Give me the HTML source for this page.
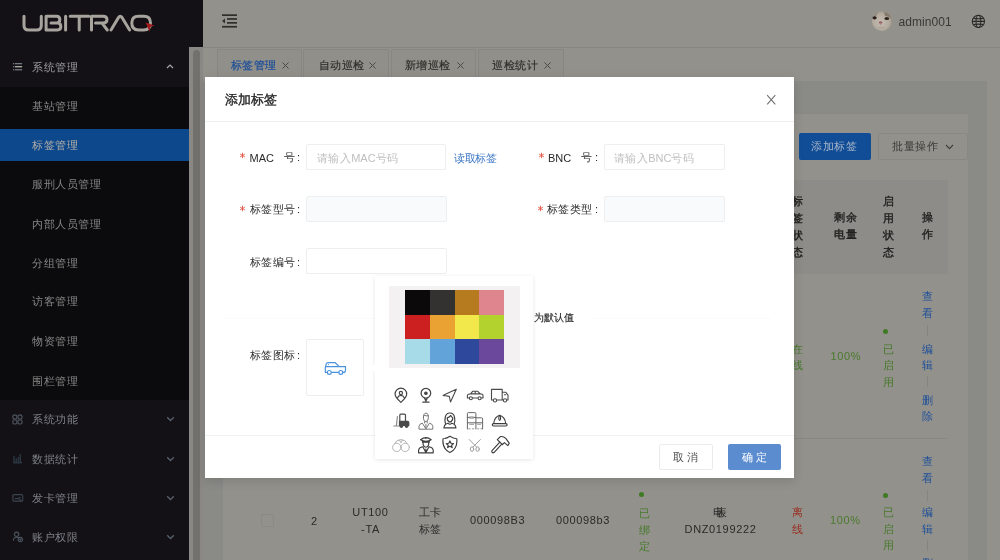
<!DOCTYPE html>
<html><head><meta charset="utf-8">
<style>
*{box-sizing:border-box;margin:0;padding:0}
html,body{width:1000px;height:560px;overflow:hidden}
body{position:relative;will-change:transform;background:#92918c;font-family:"Liberation Sans",sans-serif;font-size:11.5px;color:#2b2a28}
.a{position:absolute}
.t{position:absolute;white-space:nowrap;line-height:1}
.cj{font-size:11px;letter-spacing:0.5px}
/* sidebar */
#logo{left:0;top:0;width:203px;height:47px;background:#131116}
#side{left:0;top:47px;width:189px;height:513px;background:#131116}
#sub{left:0;top:87px;width:189px;height:313px;background:#0b0a0c}
#sel{left:0;top:128.7px;width:189px;height:32.5px;background:#0e488c}
.mi{color:#878787}
.mh{color:#7e8088}
#sb{left:189px;top:47px;width:14px;height:513px;background:#898885}
#thumb{left:193px;top:50px;width:7.4px;height:520px;background:#72716d;border-radius:4px}
/* header */
#hdr{left:203px;top:0;width:797px;height:48px;background:#92918c;border-bottom:1.5px solid #878682}
#tabs{left:203px;top:48px;width:797px;height:33px;background:#92918c}
.tab{position:absolute;top:49px;height:32px;background:#908f8a;border:1px solid #878682;border-bottom:none;border-radius:2px 2px 0 0}
#pg{left:203px;top:81px;width:784px;height:479px;background:#8a8a87}
#card{left:222.5px;top:114px;width:745.5px;height:446px;background:#92918c}
#thd{left:222px;top:180px;width:726px;height:94px;background:#8d8c88}
.th{position:absolute;font-size:11px;line-height:17px;color:#1f1e1c;-webkit-text-stroke:0.35px #1f1e1c;white-space:nowrap;letter-spacing:0.5px}
.td{position:absolute;font-size:11px;line-height:16.7px;color:#2b2a28;white-space:nowrap;letter-spacing:0.5px}
.ln{font-size:11px;letter-spacing:0.65px;color:#2b2a28}
.g{color:#467a2a}.r{color:#9a2e20}.b{color:#1e4f99}
/* modal */
#modal{left:205px;top:77px;width:589px;height:401px;background:#fff;box-shadow:0 3px 10px rgba(0,0,0,0.13)}
.lbl{color:#2a2a2a}
.req{color:#f04134;font-size:11px}
.inp{position:absolute;height:26px;border:1px solid #eceef0;border-radius:2px;background:#fff}
.inp.dis{background:#f9fafb}
.ph{color:#bfbfbf;letter-spacing:0.4px}
#pop{left:375px;top:276.3px;width:158px;height:182.5px;background:#fff;box-shadow:0 1px 4px rgba(0,0,0,0.1);border-radius:1px}
</style></head><body>
<!-- sidebar -->
<div id="logo" class="a">
<svg class="a" style="left:0;top:0" width="203" height="47" viewBox="0 0 203 47">
<g fill="none" stroke="#a6a49d" stroke-width="3" stroke-linecap="round" stroke-linejoin="round">
<path d="M24 16.2V25.5Q24 30 28.5 30H36.8Q41.3 30 41.3 25.5V16.2"/>
<path d="M46.1 16.2V30H57.5Q60.8 30 60.8 26.6Q60.8 23.1 57.5 23.1H51M46.1 16.2H56.5Q59.8 16.2 59.8 19.6Q59.8 23.1 56.5 23.1"/>
<path d="M65.6 16.2V30"/>
<path d="M70.2 16.2H88.8M79.2 16.2V30"/>
<path d="M91.5 30V16.2H103Q107 16.2 107 19.6Q107 23.1 103 23.1H95.5M102 23.1L107.3 30"/>
<path d="M111 30L118.5 17.5Q120.2 15 122 17.5L129.6 30"/>
<path d="M138.5 16.2H143.8Q150.5 16.2 150.5 23.1Q150.5 30 143.8 30H138.5Q131.8 30 131.8 23.1Q131.8 16.2 138.5 16.2Z"/>
</g>
<path d="M145.5 22.5L154.5 25.5L150.5 26.8L149.5 31.5Z" fill="#a31919"/>
</svg>
</div>
<div id="side" class="a"></div>
<div id="sub" class="a"></div>
<div id="sel" class="a"></div>
<!-- menu -->
<svg class="a" style="left:13px;top:63px" width="10" height="8" viewBox="0 0 10 8"><g fill="#727880"><rect x="0" y="0" width="1.2" height="1.3"/><rect x="0" y="3.05" width="1.2" height="1.3"/><rect x="0" y="6.1" width="1.2" height="1.3"/><rect x="1.9" y="0" width="7.2" height="1.3"/><rect x="1.9" y="3.05" width="7.2" height="1.3" fill="#b4b2ab"/><rect x="1.9" y="6.1" width="7.2" height="1.3"/></g></svg>
<div class="t cj" style="left:32px;top:62px;color:#9c9c9c">系统管理</div>
<svg class="a" style="left:166px;top:64px" width="8" height="5" viewBox="0 0 8 5"><path d="M1 4L4 1L7 4" fill="none" stroke="#a8a8a8" stroke-width="1.2"/></svg>
<div class="t cj mi" style="left:32px;top:100.5px">基站管理</div>
<div class="t cj mi" style="left:32px;top:140px;color:#b3afa7">标签管理</div>
<div class="t cj mi" style="left:32px;top:179px">服刑人员管理</div>
<div class="t cj mi" style="left:32px;top:219px">内部人员管理</div>
<div class="t cj mi" style="left:32px;top:257.5px">分组管理</div>
<div class="t cj mi" style="left:32px;top:296px">访客管理</div>
<div class="t cj mi" style="left:32px;top:336px">物资管理</div>
<div class="t cj mi" style="left:32px;top:375.5px">围栏管理</div>
<div class="t cj mh" style="left:32px;top:414px">系统功能</div>
<div class="t cj mh" style="left:32px;top:453.5px">数据统计</div>
<div class="t cj mh" style="left:32px;top:493px">发卡管理</div>
<div class="t cj mh" style="left:32px;top:532px">账户权限</div>
<svg class="a" style="left:12px;top:414px" width="11" height="11" viewBox="0 0 11 11"><g fill="none" stroke="#4c535d" stroke-width="1.1"><circle cx="2.9" cy="3" r="2.1"/><circle cx="8" cy="3" r="2.1"/><circle cx="2.9" cy="7.9" r="2.1"/><circle cx="8" cy="7.9" r="2.1"/></g></svg>
<svg class="a" style="left:12px;top:453px" width="11" height="11" viewBox="0 0 11 11"><g fill="#2c3744"><rect x="1" y="8.6" width="9" height="1.8"/><rect x="1.3" y="2.8" width="1.4" height="5.8"/><rect x="3.6" y="5.5" width="1.4" height="3.1"/><rect x="5.7" y="4" width="1.4" height="4.6"/><rect x="7.6" y="1.2" width="1.4" height="7.4"/></g></svg>
<svg class="a" style="left:12px;top:493px" width="12" height="10" viewBox="0 0 12 10"><g fill="none" stroke="#3b434e" stroke-width="1.2"><rect x="0.9" y="1.6" width="9.8" height="6.6" rx="1"/><path d="M2.8 5.6H6.5L8.4 4.2M7.5 6.2L9.3 8.4"/></g></svg>
<svg class="a" style="left:12px;top:531px" width="12" height="12" viewBox="0 0 12 12"><g fill="none" stroke="#4a525c" stroke-width="1.1"><circle cx="4.6" cy="3.3" r="2.2"/><path d="M1.4 9.8Q1.4 6.3 4.6 6.3Q6 6.3 6.8 7"/><circle cx="8.3" cy="8.6" r="2.2"/><circle cx="8.3" cy="8.6" r="0.6" fill="#4a525c"/></g></svg>
<svg class="a" style="left:166px;top:416px" width="9" height="6" viewBox="0 0 9 6"><path d="M1.2 1.2L4.5 4.5L7.8 1.2" fill="none" stroke="#56606a" stroke-width="1.3"/></svg>
<svg class="a" style="left:166px;top:455.5px" width="9" height="6" viewBox="0 0 9 6"><path d="M1.2 1.2L4.5 4.5L7.8 1.2" fill="none" stroke="#56606a" stroke-width="1.3"/></svg>
<svg class="a" style="left:166px;top:495px" width="9" height="6" viewBox="0 0 9 6"><path d="M1.2 1.2L4.5 4.5L7.8 1.2" fill="none" stroke="#56606a" stroke-width="1.3"/></svg>
<svg class="a" style="left:166px;top:534px" width="9" height="6" viewBox="0 0 9 6"><path d="M1.2 1.2L4.5 4.5L7.8 1.2" fill="none" stroke="#56606a" stroke-width="1.3"/></svg>
<div id="sb" class="a"></div>
<div id="thumb" class="a"></div>
<!-- header -->
<div id="hdr" class="a"></div>
<svg class="a" style="left:220px;top:12px" width="20" height="18" viewBox="0 0 20 18"><g fill="#2f2e2b"><rect x="2" y="2.3" width="15" height="1.7"/><rect x="7" y="6.1" width="10" height="1.7"/><rect x="7" y="10" width="10" height="1.7"/><rect x="2" y="13.9" width="15" height="1.7"/><path d="M2.1 8.95L5 6.5V11.4Z"/></g></svg>
<svg class="a" style="left:872px;top:11px" width="20" height="20" viewBox="0 0 20 20"><defs><radialGradient id="fg" cx="0.45" cy="0.55" r="0.6"><stop offset="0" stop-color="#c4bdb2"/><stop offset="0.7" stop-color="#b3aa9d"/><stop offset="1" stop-color="#978c7f"/></radialGradient></defs><circle cx="10" cy="10" r="10" fill="url(#fg)"/><path d="M12 1Q18 2 19.5 8Q17 5 13 5Z" fill="#857a6e"/><path d="M1 8Q2 3 6 1.5Q5 4 3 6Z" fill="#8c8276"/><ellipse cx="2.6" cy="6.8" rx="2.1" ry="1.6" fill="#2a211d"/><ellipse cx="14.8" cy="7.5" rx="2.4" ry="1.6" fill="#2e2520"/><ellipse cx="8.6" cy="11.4" rx="1.8" ry="1.2" fill="#9a6268"/><path d="M8.6 12.3V14" stroke="#8d6a66" stroke-width="0.6"/><path d="M6 17Q9 15.6 12 17" stroke="#a59a8e" stroke-width="0.6" fill="none"/></svg>
<div class="t" style="left:898.5px;top:16px;font-size:12px;color:#3a3936;letter-spacing:0.05px">admin001</div>
<svg class="a" style="left:970px;top:13px" width="17" height="17" viewBox="0 0 17 17"><g fill="none" stroke="#2a2927" stroke-width="1.05"><circle cx="8.4" cy="8.4" r="6.1"/><ellipse cx="8.4" cy="8.4" rx="2.4" ry="6.1"/><path d="M2.3 8.4H14.5M3.4 5.2Q8.4 6.2 13.4 5.2M3.4 11.6Q8.4 10.6 13.4 11.6"/></g></svg>
<div id="tabs" class="a"></div>
<div class="tab" style="left:216.5px;width:85px"></div>
<div class="tab" style="left:303px;width:86px"></div>
<div class="tab" style="left:391px;width:85px"></div>
<div class="tab" style="left:478px;width:86px"></div>
<div class="t cj" style="left:230.5px;top:60px;color:#1b4d98;-webkit-text-stroke:0.2px #1b4d98">标签管理</div>
<div class="t cj" style="left:318.5px;top:60px;color:#2e2d2a;-webkit-text-stroke:0.15px #2e2d2a">自动巡检</div>
<div class="t cj" style="left:404.5px;top:60px;color:#2e2d2a;-webkit-text-stroke:0.15px #2e2d2a">新增巡检</div>
<div class="t cj" style="left:492px;top:60px;color:#2e2d2a;-webkit-text-stroke:0.15px #2e2d2a">巡检统计</div>
<svg class="a" style="left:282px;top:62px" width="7" height="7" viewBox="0 0 7 7"><path d="M0.5 0.5L6.5 6.5M6.5 0.5L0.5 6.5" stroke="#4a4946" stroke-width="1"/></svg>
<svg class="a" style="left:369px;top:62px" width="7" height="7" viewBox="0 0 7 7"><path d="M0.5 0.5L6.5 6.5M6.5 0.5L0.5 6.5" stroke="#4a4946" stroke-width="1"/></svg>
<svg class="a" style="left:457px;top:62px" width="7" height="7" viewBox="0 0 7 7"><path d="M0.5 0.5L6.5 6.5M6.5 0.5L0.5 6.5" stroke="#4a4946" stroke-width="1"/></svg>
<svg class="a" style="left:544px;top:62px" width="7" height="7" viewBox="0 0 7 7"><path d="M0.5 0.5L6.5 6.5M6.5 0.5L0.5 6.5" stroke="#4a4946" stroke-width="1"/></svg>
<div id="pg" class="a"></div>
<div class="a" style="left:987px;top:81px;width:13px;height:479px;background:#92918c"></div>
<div id="card" class="a"></div>
<div class="a" style="left:799px;top:133px;width:72px;height:27px;background:#114d97;border-radius:2px"></div>
<div class="t cj" style="left:811px;top:141px;color:#a9b6c7">添加标签</div>
<div class="a" style="left:878px;top:133px;width:90px;height:27px;border:1px solid #898884;border-radius:2px"></div>
<div class="t cj" style="left:892px;top:141px;color:#3a3936">批量操作</div>
<svg class="a" style="left:945px;top:144px" width="9" height="6" viewBox="0 0 9 6"><path d="M1 1L4.5 4.6L8 1" fill="none" stroke="#3e3d3a" stroke-width="1.1"/></svg>
<div id="thd" class="a"></div>
<div class="a" style="left:222px;top:438px;width:726px;height:1px;background:#898884"></div>
<!-- table header text -->
<div class="th" style="left:792px;top:192.5px">标<br>签<br>状<br>态</div>
<div class="th" style="left:834px;top:209px">剩余<br>电量</div>
<div class="th" style="left:883px;top:192.5px">启<br>用<br>状<br>态</div>
<div class="th" style="left:922px;top:209px">操<br>作</div>
<!-- row1 -->
<div class="td g" style="left:792px;top:340.5px">在<br>线</div>
<div class="t ln" style="left:830.5px;top:351px;color:#4a7a2c">100%</div>
<div class="a" style="left:882.5px;top:328.5px;width:5px;height:5px;border-radius:50%;background:#3f7a24"></div>
<div class="td g" style="left:883px;top:340.5px">已<br>启<br>用</div>
<div class="td b" style="left:922px;top:288px">查<br>看</div>
<div class="a" style="left:927px;top:325px;width:1px;height:11px;background:#858480"></div>
<div class="td b" style="left:922px;top:340.5px">编<br>辑</div>
<div class="a" style="left:927px;top:376px;width:1px;height:11px;background:#858480"></div>
<div class="td b" style="left:922px;top:391.5px">删<br>除</div>
<!-- row2 -->
<div class="a" style="left:261px;top:514px;width:13px;height:13px;border:1px solid #8a8985;border-radius:2px"></div>
<div class="t ln" style="left:311px;top:515.7px">2</div>
<div class="t ln" style="left:350.5px;top:503.6px;line-height:17.3px;text-align:center;width:40px">UT100<br>-TA</div>
<div class="td" style="left:418.5px;top:504px">工卡<br>标签</div>
<div class="t ln" style="left:470px;top:514.7px">000098B3</div>
<div class="t ln" style="left:556px;top:514.7px">000098b3</div>
<div class="a" style="left:638.9px;top:492.3px;width:5px;height:5px;border-radius:50%;background:#3f7a24"></div>
<div class="td g" style="left:639px;top:505px">已<br>绑<br>定</div>
<div class="t ln" style="left:680px;top:503.5px;line-height:17.3px;text-align:center;width:81px"><span style="letter-spacing:-8.5px">电</span>表<br>DNZ0199222</div>
<div class="td r" style="left:792px;top:504px">离<br>线</div>
<div class="t ln" style="left:830px;top:514.5px;color:#4a7a2c">100%</div>
<div class="a" style="left:882.5px;top:492.5px;width:5px;height:5px;border-radius:50%;background:#3f7a24"></div>
<div class="td g" style="left:883px;top:504px">已<br>启<br>用</div>
<div class="td b" style="left:922px;top:453px">查<br>看</div>
<div class="a" style="left:927px;top:490px;width:1px;height:11px;background:#858480"></div>
<div class="td b" style="left:922px;top:504px">编<br>辑</div>
<div class="a" style="left:927px;top:540px;width:1px;height:11px;background:#858480"></div>
<div class="td b" style="left:922px;top:554.5px">删<br>除</div>
<!-- modal -->
<div id="modal" class="a"></div>
<div class="t" style="left:225px;top:92.5px;font-size:13px;color:#262626;-webkit-text-stroke:0.35px #262626">添加标签</div>
<svg class="a" style="left:766px;top:94px" width="11" height="12" viewBox="0 0 11 12"><path d="M1.2 1.2L9.3 10.3M9.3 1.2L1.2 10.3" stroke="#6e6e6e" stroke-width="1.05"/></svg>
<div class="a" style="left:205px;top:120.5px;width:589px;height:1px;background:#eceef0"></div>
<!-- row1 -->
<svg class="a" style="left:239.4px;top:152.3px" width="7" height="7" viewBox="0 0 7 7"><path d="M3.5 0.8V6.2M1.16 2.15L5.84 4.85M1.16 4.85L5.84 2.15" stroke="#e35d4a" stroke-width="0.95"/></svg>
<div class="t lbl" style="left:249.5px;top:153px;font-size:11px">MAC</div>
<div class="t lbl cj" style="left:283.5px;top:152px">号</div>
<div class="t lbl" style="left:297px;top:152px;font-size:11px">:</div>
<div class="inp" style="left:306px;top:144px;width:140px"></div>
<div class="t cj ph" style="left:317px;top:152.5px">请输入<span style="font-size:11px;letter-spacing:0">MAC</span>号码</div>
<div class="t" style="left:454px;top:152.5px;color:#3a76c4;font-size:11px;letter-spacing:-0.4px">读取标签</div>
<svg class="a" style="left:537.7px;top:152.3px" width="7" height="7" viewBox="0 0 7 7"><path d="M3.5 0.8V6.2M1.16 2.15L5.84 4.85M1.16 4.85L5.84 2.15" stroke="#e35d4a" stroke-width="0.95"/></svg>
<div class="t lbl" style="left:548px;top:153px;font-size:11px">BNC</div>
<div class="t lbl cj" style="left:581px;top:152px">号</div>
<div class="t lbl" style="left:595px;top:152px;font-size:11px">:</div>
<div class="inp" style="left:603.5px;top:144px;width:121.5px"></div>
<div class="t cj ph" style="left:614px;top:152.5px">请输入<span style="font-size:11px;letter-spacing:0">BNC</span>号码</div>
<!-- row2 -->
<svg class="a" style="left:239.4px;top:204.5px" width="7" height="7" viewBox="0 0 7 7"><path d="M3.5 0.8V6.2M1.16 2.15L5.84 4.85M1.16 4.85L5.84 2.15" stroke="#e35d4a" stroke-width="0.95"/></svg>
<div class="t lbl cj" style="left:249.5px;top:204px">标签型号</div>
<div class="t lbl" style="left:297px;top:204px;font-size:11px">:</div>
<div class="inp dis" style="left:306px;top:196px;width:141px"></div>
<svg class="a" style="left:536.5px;top:204.5px" width="7" height="7" viewBox="0 0 7 7"><path d="M3.5 0.8V6.2M1.16 2.15L5.84 4.85M1.16 4.85L5.84 2.15" stroke="#e35d4a" stroke-width="0.95"/></svg>
<div class="t lbl cj" style="left:546.5px;top:204px">标签类型</div>
<div class="t lbl" style="left:595px;top:204px;font-size:11px">:</div>
<div class="inp dis" style="left:603.5px;top:196px;width:121.5px"></div>
<!-- row3 -->
<div class="t lbl cj" style="left:249.5px;top:256.5px">标签编号</div>
<div class="t lbl" style="left:297px;top:256.5px;font-size:11px">:</div>
<div class="inp" style="left:306px;top:248px;width:141px"></div>
<div class="a" style="left:225px;top:317.5px;width:150px;height:1px;background:#fafbfb"></div><div class="a" style="left:594px;top:317.5px;width:177px;height:1px;background:#fafbfb"></div>
<div class="t" style="left:534px;top:313px;font-size:10px;color:#262626;-webkit-text-stroke:0.15px #262626">为默认值</div>
<!-- icon row -->
<div class="t lbl cj" style="left:249.5px;top:350px">标签图标</div>
<div class="t lbl" style="left:297px;top:350px;font-size:11px">:</div>
<div class="a" style="left:306px;top:339px;width:58px;height:56.5px;border:1px solid #eceef0;border-radius:2px"></div>
<svg class="a" style="left:324px;top:361px" width="23" height="14" viewBox="0 0 23 14"><g fill="none" stroke="#4a91de" stroke-width="1.2" stroke-linejoin="round"><path d="M3.3 11.3H1.3V6.6L2.2 3.2Q2.6 1.7 4.2 1.7H11.2L15.3 5.6H21.5V9.6L20.8 11.3H18.8M14.7 11.3H7.4M1.6 5.6H15.3"/><path d="M4 3.6H5" stroke-width="0.9"/><circle cx="5.3" cy="11.4" r="1.9" fill="#fff"/><circle cx="16.8" cy="11.4" r="1.9" fill="#fff"/></g></svg>
<!-- footer -->
<div class="a" style="left:205px;top:435px;width:589px;height:1px;background:#eef0f2"></div>
<div class="a" style="left:659px;top:444px;width:54px;height:26px;border:1px solid #e9ebee;border-radius:2px;background:#fff"></div>
<div class="t" style="left:672.5px;top:451.5px;font-size:11px;letter-spacing:3.5px;color:#505050">取消</div>
<div class="a" style="left:728px;top:444px;width:53px;height:26px;background:#5b8ccf;border-radius:2px"></div>
<div class="t" style="left:741.5px;top:451.5px;font-size:11px;letter-spacing:3.5px;color:#fff">确定</div>
<div id="pop" class="a"></div>
<div class="a" style="left:369.5px;top:364px;width:0;height:0;border-top:4.5px solid transparent;border-bottom:4.5px solid transparent;border-right:5px solid #fff"></div>
<div class="a" style="left:389px;top:286px;width:131px;height:82px;background:#f3f1f2"></div>
<div class="a" style="left:405px;top:290px;width:25.3px;height:24.8px;background:#0b0909"></div>
<div class="a" style="left:430px;top:290px;width:24.8px;height:24.8px;background:#343231"></div>
<div class="a" style="left:454.5px;top:290px;width:25.05px;height:24.8px;background:#b77b1f"></div>
<div class="a" style="left:479.25px;top:290px;width:25.05px;height:24.8px;background:#df858e"></div>
<div class="a" style="left:405px;top:314.5px;width:25.3px;height:24.8px;background:#cb1f20"></div>
<div class="a" style="left:430px;top:314.5px;width:24.8px;height:24.8px;background:#eaa332"></div>
<div class="a" style="left:454.5px;top:314.5px;width:25.05px;height:24.8px;background:#f3e84b"></div>
<div class="a" style="left:479.25px;top:314.5px;width:25.05px;height:24.8px;background:#b3d22e"></div>
<div class="a" style="left:405px;top:339px;width:25.3px;height:24.8px;background:#a8dbe8"></div>
<div class="a" style="left:430px;top:339px;width:24.8px;height:24.8px;background:#62a4da"></div>
<div class="a" style="left:454.5px;top:339px;width:25.05px;height:24.8px;background:#2e489b"></div>
<div class="a" style="left:479.25px;top:339px;width:25.05px;height:24.8px;background:#6b489c"></div>
<svg class="a" style="left:390.6px;top:385px" width="20" height="20" viewBox="0 0 20 20"><g fill="none" stroke="#444" stroke-width="1.2" stroke-linejoin="round" stroke-linecap="round"><path d="M9.9 17.3C7.2 14.8 4.1 12.3 4.1 9A5.8 5.8 0 0 1 15.7 9C15.7 12.3 12.6 14.8 9.9 17.3Z"/><circle cx="9.9" cy="7.9" r="1.6"/><path d="M6.3 13Q7.6 10.3 9.9 10.3Q12.2 10.3 13.5 13"/></g></svg>
<svg class="a" style="left:415.5px;top:385px" width="20" height="20" viewBox="0 0 20 20"><g fill="none" stroke="#444" stroke-width="1.25" stroke-linejoin="round" stroke-linecap="round"><circle cx="9.9" cy="8.2" r="4.8"/><circle cx="9.9" cy="8.2" r="1.2" fill="#444"/><path d="M8.5 13L9.9 16L11.3 13M6.8 17.2H13"/></g></svg>
<svg class="a" style="left:440px;top:385px" width="20" height="20" viewBox="0 0 20 20"><g fill="none" stroke="#4a4a4a" stroke-width="1.1" stroke-linejoin="round" stroke-linecap="round"><path d="M16.3 4.2L3.1 10.4L9.3 11.4L10.5 17Z"/></g></svg>
<svg class="a" style="left:464.9px;top:385px" width="20" height="20" viewBox="0 0 20 20"><g fill="none" stroke="#4a4a4a" stroke-width="1.1" stroke-linejoin="round" stroke-linecap="round"><path d="M2.4 13V10.6Q2.4 9.6 3.4 9.3L5.6 8.9L7.6 6.3H12.7L15.3 8.9L17.2 9.3Q18 9.6 18 10.6V13ZM5.6 8.9H15.3M10.2 6.3V8.9"/><circle cx="5.9" cy="13.2" r="1.5" fill="#fff"/><circle cx="14.6" cy="13.2" r="1.5" fill="#fff"/></g></svg>
<svg class="a" style="left:489.8px;top:385px" width="20" height="20" viewBox="0 0 20 20"><g fill="none" stroke="#4a4a4a" stroke-width="1.1" stroke-linejoin="round" stroke-linecap="round"><path d="M1.5 15V4.4H12.2V15M12.2 7.2H15.6L18 10.2V15H16.6M13.4 15H6.6M3.4 15H1.5M14.4 9.8H15.6"/><circle cx="5" cy="15.4" r="1.6"/><circle cx="15" cy="15.4" r="1.6"/></g></svg>
<svg class="a" style="left:390.6px;top:410.5px" width="20" height="20" viewBox="0 0 20 20"><g fill="none" stroke="#4a4a4a" stroke-width="1.2" stroke-linejoin="round" stroke-linecap="round"><path d="M6.4 5.5L5.4 14.5M2.8 15H7.5" stroke="#8a8a8a"/><path d="M8.8 10.3V4.2Q8.8 3.2 9.8 3.2H13.5Q14.5 3.2 14.5 4.2V10.3"/><path d="M8.5 10.3H16.5Q17.8 10.3 17.8 11.6V14.3H8.5Z" fill="#4a4a4a"/><circle cx="10.3" cy="14.8" r="1.5" fill="#4a4a4a"/><circle cx="15.6" cy="14.8" r="1.5" fill="#4a4a4a"/></g></svg>
<svg class="a" style="left:415.5px;top:410.5px" width="20" height="20" viewBox="0 0 20 20"><g fill="none" stroke="#777" stroke-width="1.0" stroke-linejoin="round" stroke-linecap="round"><path d="M7.4 6.3Q7.4 10.3 9.9 10.6Q12.4 10.3 12.4 6.3Q12.4 2.2 9.9 2.2Q7.4 2.2 7.4 6.3ZM8 4.3Q10 5.2 12.3 4.8"/><path d="M3 17.8V15.3Q3.2 13 6.3 12.1L9.9 17.8L13.5 12.1Q16.6 13 16.8 15.3V17.8ZM8.6 10.5V12M11.2 10.5V12M9.9 13.3V16.8"/></g></svg>
<svg class="a" style="left:440px;top:410.5px" width="20" height="20" viewBox="0 0 20 20"><g fill="none" stroke="#3e3e3e" stroke-width="1.15" stroke-linejoin="round" stroke-linecap="round"><path d="M5.5 12.5Q4.6 10 5.2 6.6Q6 2 9.9 2Q13.8 2 14.6 6.6Q15.2 10 14.3 12.5"/><path d="M7.2 6.8Q9 6.4 10.8 4.5Q12 6.6 12.8 6.8Q12.8 10.4 9.9 11.2Q7.1 10.4 7.2 6.8Z"/><path d="M3.9 16.9Q4.2 13 8 12.2Q9.9 14.3 11.8 12.2Q15.6 13 15.9 16.9Z"/></g></svg>
<svg class="a" style="left:464.9px;top:410.5px" width="20" height="20" viewBox="0 0 20 20"><g fill="none" stroke="#666" stroke-width="1.0" stroke-linejoin="round" stroke-linecap="round"><path d="M2.4 6.5V2.6Q2.4 1.6 3.4 1.6H9.9Q10.9 1.6 10.9 2.6V6.5Q6.6 5.4 2.4 6.5ZM2.4 6.5V18M10.9 6.5V18M10.9 6.8H16.6Q17.6 6.8 17.6 7.8V18M2.4 11.8H17.6"/><path d="M4.6 7.2H8.6M4.6 13.3H8.6M12.6 13.3H15.6M3.8 17.8H5.2M7.4 17.8H8.8M12.6 17.8H13.8M15.8 17.8H16.8" stroke="#9a9a9a"/></g></svg>
<svg class="a" style="left:489.8px;top:410.5px" width="20" height="20" viewBox="0 0 20 20"><g fill="none" stroke="#3e3e3e" stroke-width="1.15" stroke-linejoin="round" stroke-linecap="round"><path d="M3.7 12.5Q4.4 5.8 9.7 4.2Q15 5.8 15.7 12.5"/><ellipse cx="9.7" cy="7" rx="0.9" ry="2.4"/><rect x="2.3" y="12.6" width="14.8" height="2.4" rx="1.2"/></g></svg>
<svg class="a" style="left:390.6px;top:434.6px" width="20" height="20" viewBox="0 0 20 20"><g fill="none" stroke="#b5b5b5" stroke-width="1.0" stroke-linejoin="round" stroke-linecap="round"><circle cx="5.8" cy="12.4" r="4.2"/><circle cx="14.2" cy="12.4" r="4.2"/><path d="M3.6 8.6Q5 4.8 9.9 4.6Q14.8 4.8 16.2 8.6M8.3 4.9L9.9 7.8L11.5 4.9"/></g></svg>
<svg class="a" style="left:415.5px;top:434.6px" width="20" height="20" viewBox="0 0 20 20"><g fill="none" stroke="#3e3e3e" stroke-width="1.15" stroke-linejoin="round" stroke-linecap="round"><path d="M4.6 4.7Q9.9 0.4 15.2 4.7Q13 6.3 9.9 6.3Q6.8 6.3 4.6 4.7ZM6.5 6.2V7.2H13.3V6.2M7 7.5Q7 12 9.9 12.2Q12.8 12 12.8 7.5M2.6 17.8V15Q3 12.6 6.8 11.8L9.9 17.5L13 11.8Q16.8 12.6 17.2 15V17.8ZM9.9 14V17M9.9 3.2V3.6"/></g></svg>
<svg class="a" style="left:440px;top:434.6px" width="20" height="20" viewBox="0 0 20 20"><g fill="none" stroke="#3e3e3e" stroke-width="1.15" stroke-linejoin="round" stroke-linecap="round"><path d="M9.9 1.3Q13.3 3.6 16.8 3.8Q17.8 13.7 9.9 17.6Q2 13.7 3 3.8Q6.5 3.6 9.9 1.3Z"/><path d="M9.9 5.9L11 8.3L13.5 8.5L11.6 10.2L12.2 12.6L9.9 11.3L7.6 12.6L8.2 10.2L6.3 8.5L8.8 8.3Z"/></g></svg>
<svg class="a" style="left:464.9px;top:434.6px" width="20" height="20" viewBox="0 0 20 20"><g fill="none" stroke="#9d9d9d" stroke-width="1.0" stroke-linejoin="round" stroke-linecap="round"><path d="M4.2 4.5L11.6 12M15.4 4.5L8 12"/><ellipse cx="7" cy="14.1" rx="1.7" ry="2.3"/><ellipse cx="12.6" cy="14.1" rx="1.7" ry="2.3"/></g></svg>
<svg class="a" style="left:489.8px;top:434.6px" width="20" height="20" viewBox="0 0 20 20"><g fill="none" stroke="#3e3e3e" stroke-width="1.15" stroke-linejoin="round" stroke-linecap="round"><path d="M7.3 4.6L10.4 1.6Q13.4 1 16 3.6L19.3 8.3L17.8 10.6L14.4 7.6L12.4 9.6Z"/><path d="M9.8 7.2L2 15.6Q1.4 16.8 2.3 17.6Q3.2 18.2 4.2 17.3L12 8.9"/></g></svg>
</body></html>
